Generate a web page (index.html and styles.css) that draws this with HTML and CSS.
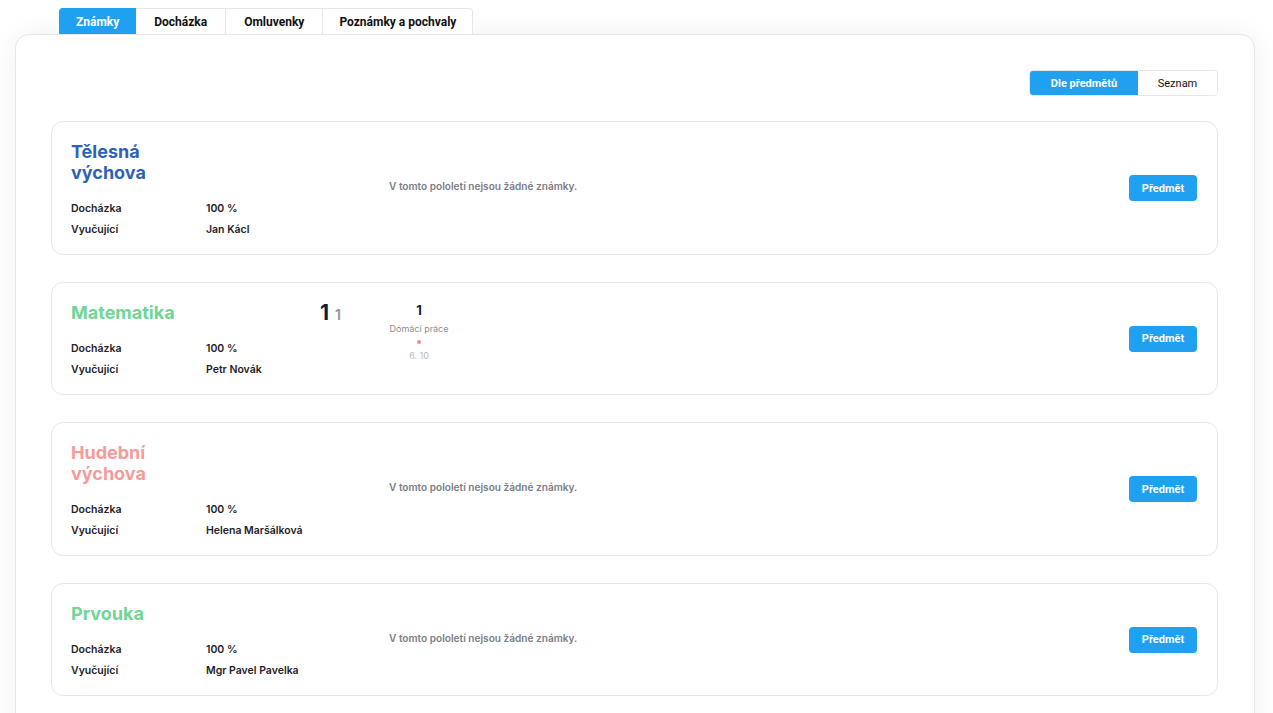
FILE: index.html
```html
<!DOCTYPE html>
<html lang="cs">
<head>
    <meta charset="UTF-8">
    <meta name="viewport" content="width=device-width, initial-scale=1.0">
    <title>Známky</title>
    <link rel="stylesheet" href="styles.css">
</head>
<body>
    <div class="page">
        <div class="tabs">
            <button class="tab active">Známky</button>
            <button class="tab">Docházka</button>
            <button class="tab">Omluvenky</button>
            <button class="tab">Poznámky a pochvaly</button>
        </div>

        <div class="panel">
            <div class="toolbar">
                <div class="toggle">
                    <button class="toggle-btn active">Dle předmětů</button>
                    <button class="toggle-btn">Seznam</button>
                </div>
            </div>

            <div class="subject">
                <div class="subject-info">
                    <h2 class="subject-name blue">Tělesná výchova</h2>
                    <div class="info-grid">
                        <span>Docházka</span><span>100 %</span>
                        <span>Vyučující</span><span>Jan Kácl</span>
                    </div>
                </div>
                <div class="average"></div>
                <div class="grades empty">V tomto pololetí nejsou žádné známky.</div>
                <button class="subject-btn">Předmět</button>
            </div>

            <div class="subject">
                <div class="subject-info">
                    <h2 class="subject-name green">Matematika</h2>
                    <div class="info-grid">
                        <span>Docházka</span><span>100 %</span>
                        <span>Vyučující</span><span>Petr Novák</span>
                    </div>
                </div>
                <div class="average top"><span class="avg-big">1</span><span class="avg-small">1</span></div>
                <div class="grades top">
                    <div class="grade">
                        <div class="grade-value">1</div>
                        <div class="grade-type">Domácí práce</div>
                        <div class="grade-dot"></div>
                        <div class="grade-date">6. 10</div>
                    </div>
                </div>
                <button class="subject-btn">Předmět</button>
            </div>

            <div class="subject">
                <div class="subject-info">
                    <h2 class="subject-name pink">Hudební výchova</h2>
                    <div class="info-grid">
                        <span>Docházka</span><span>100 %</span>
                        <span>Vyučující</span><span>Helena Maršálková</span>
                    </div>
                </div>
                <div class="average"></div>
                <div class="grades empty">V tomto pololetí nejsou žádné známky.</div>
                <button class="subject-btn">Předmět</button>
            </div>

            <div class="subject">
                <div class="subject-info">
                    <h2 class="subject-name green">Prvouka</h2>
                    <div class="info-grid">
                        <span>Docházka</span><span>100 %</span>
                        <span>Vyučující</span><span>Mgr Pavel Pavelka</span>
                    </div>
                </div>
                <div class="average"></div>
                <div class="grades empty">V tomto pololetí nejsou žádné známky.</div>
                <button class="subject-btn">Předmět</button>
            </div>
        </div>
    </div>
</body>
</html>
```

FILE: styles.css
```css
:root {
    --primary-color: #1fa0f0;
    --border-color: #e6e7ea;
    --text-color: #1f2228;
    --muted-color: #7b7e85;
}

* {
    margin: 0;
    padding: 0;
    box-sizing: border-box;
}

body {
    background-color: #ffffff;
    color: var(--text-color);
    font-family: 'Inter', 'Roboto', sans-serif;
    overflow: hidden;
}

.page {
    padding: 8px 18px 0 15px;
}

.tabs {
    display: flex;
    margin-left: 44px;
}

.tab {
    height: 26px;
    padding: 0 18px;
    border: 1px solid var(--border-color);
    border-left: none;
    border-bottom: none;
    background: #ffffff;
    font-family: 'Roboto', sans-serif;
    font-size: 12px;
    font-weight: 700;
    color: #111;
    cursor: pointer;
}

.tab:first-child {
    padding: 0 16px;
    border-left: 1px solid var(--border-color);
    border-top-left-radius: 4px;
}

.tab:last-child {
    padding: 0 16px;
    border-top-right-radius: 4px;
}

.tab.active {
    background-color: var(--primary-color);
    border-color: var(--primary-color);
    color: white;
}

.panel {
    background: white;
    border: 1px solid var(--border-color);
    border-radius: 14px;
    padding: 35px 36px 40px 35px;
    box-shadow: 0 0 30px rgba(0, 0, 0, 0.06);
    min-height: 700px;
}

.toolbar {
    display: flex;
    justify-content: flex-end;
    margin-bottom: 25px;
}

.toggle {
    display: flex;
    border: 1px solid var(--border-color);
    border-radius: 4px;
    overflow: hidden;
}

.toggle-btn {
    height: 24px;
    border: none;
    background: white;
    font-family: 'Roboto', sans-serif;
    font-size: 11px;
    color: #111;
    width: 79px;
    cursor: pointer;
}

.toggle-btn.active {
    width: 108px;
    background-color: var(--primary-color);
    color: white;
    font-weight: 700;
}

.subject {
    display: flex;
    align-items: center;
    border: 1px solid var(--border-color);
    border-radius: 12px;
    padding: 19px 20px 14px 19px;
    margin-bottom: 27px;
}

.subject-info {
    width: 249px;
    flex-shrink: 0;
}

.subject-name {
    max-width: 140px;
    font-size: 18px;
    line-height: 21px;
    font-weight: 700;
    margin-bottom: 15px;
}

.subject-name.blue { color: #2f62b5; }
.subject-name.green { color: #6fd693; }
.subject-name.pink { color: #f79a9a; }

.info-grid {
    display: grid;
    grid-template-columns: 135px auto;
    font-size: 10.5px;
    font-weight: 600;
    line-height: 21px;
}

.average {
    width: 69px;
    flex-shrink: 0;
    display: flex;
    align-items: baseline;
    gap: 6px;
}

.top {
    align-self: flex-start;
}

.avg-big {
    font-size: 21px;
    font-weight: 700;
    color: #0c1f3f;
    line-height: 22px;
}

.avg-small {
    font-size: 14px;
    font-weight: 600;
    color: #8c94a3;
}

.grades {
    flex: 1;
}

.grades.empty {
    font-size: 10.1px;
    font-weight: 600;
    color: var(--muted-color);
    padding-bottom: 9px;
}

.grade {
    width: 60px;
    text-align: center;
}

.grade-value {
    font-size: 13px;
    font-weight: 700;
    color: #0c1f3f;
    line-height: 16px;
}

.grade-type {
    font-size: 9px;
    color: #8a8d94;
    line-height: 13px;
    margin-top: 4px;
}

.grade-dot {
    width: 4px;
    height: 4px;
    border-radius: 50%;
    background: #f28b8b;
    margin: 5px auto 5px;
}

.grade-date {
    font-size: 9px;
    color: #b9bcc2;
    line-height: 13px;
    margin-bottom: 4px;
}

.subject-btn {
    width: 68px;
    height: 26px;
    border: none;
    border-radius: 4px;
    background-color: var(--primary-color);
    color: white;
    font-family: 'Roboto', sans-serif;
    font-size: 11px;
    font-weight: 700;
    cursor: pointer;
    margin-bottom: 5px;
}
```
